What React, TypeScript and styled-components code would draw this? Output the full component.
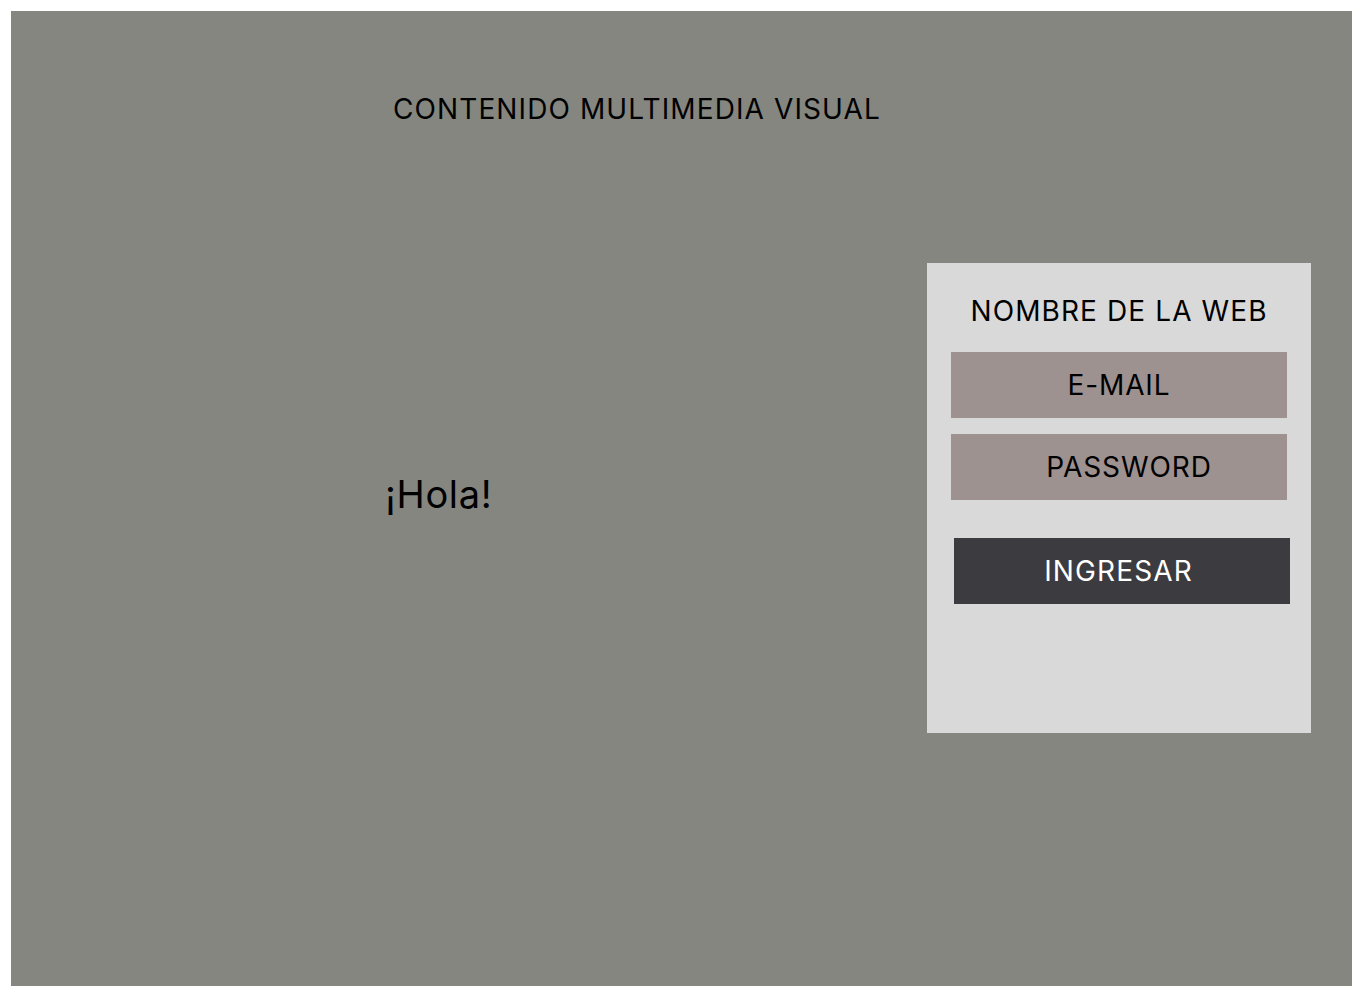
import React from 'react';
import styled, {createGlobalStyle} from "styled-components";

const GlobalStyle = createGlobalStyle`
    body {
        margin: 0;
        background: #ffffff;
        font-family: Inter, "Noto Sans", sans-serif;
        letter-spacing: 0.04em;
    }
`

export default function App() {
    return (
        <StyledPage>
            <GlobalStyle/>
            <StyledStage>
                <StyledHeader>CONTENIDO MULTIMEDIA VISUAL</StyledHeader>

                <StyledMain>
                    <StyledGreeting>¡Hola!</StyledGreeting>

                    <StyledPanel>
                        <StyledPanelTitle>NOMBRE DE LA WEB</StyledPanelTitle>
                        <StyledField>E-MAIL</StyledField>
                        <StyledField shift={20}>PASSWORD</StyledField>
                        <StyledButton type={"button"}>INGRESAR</StyledButton>
                    </StyledPanel>
                </StyledMain>
            </StyledStage>
        </StyledPage>
    );
}

const StyledPage = styled.div`
    padding: 11px 14px 14px 11px;
`

const StyledStage = styled.section`
    height: 975px;
    background-color: #858680;
    box-sizing: border-box;
    padding-top: 78px;
    color: #000;
`

const StyledHeader = styled.h1`
    margin: 0 0 0 382px;
    font-size: 28px;
    font-weight: 400;
    line-height: 40px;
    letter-spacing: 1.1px;
`

const StyledMain = styled.div`
    display: grid;
    grid-template-columns: 374px 542px 384px;
    margin-top: 134px;
`

const StyledGreeting = styled.p`
    grid-column: 1 / 3;
    grid-row: 1;
    padding-left: 374px;
    margin: 207px 0 0;
    font-size: 38px;
    line-height: 48px;
`

const StyledPanel = styled.div`
    grid-column: 3;
    grid-row: 1;
    height: 470px;
    background-color: #d9d9d9;
    box-sizing: border-box;
    padding: 28px 24px 0;
    display: flex;
    flex-direction: column;
    gap: 16px;
`

const StyledPanelTitle = styled.h2`
    margin: 0 0 5px;
    text-align: center;
    font-size: 28px;
    font-weight: 400;
    line-height: 40px;
    letter-spacing: 1.1px;
`

const StyledField = styled.div<{ shift?: number }>`
    height: 66px;
    background-color: #9e9290;
    display: flex;
    align-items: center;
    justify-content: center;
    padding-left: ${props => props.shift || 0}px;
    font-size: 28px;
    letter-spacing: 0.9px;
`

const StyledButton = styled.button`
    height: 66px;
    width: 336px;
    margin: 22px 0 0 3px;
    padding: 0 7px 0 0;
    border: none;
    background-color: #3c3b40;
    color: #ffffff;
    font-family: Inter, "Noto Sans", sans-serif;
    font-size: 28px;
    letter-spacing: 0.04em;
`
